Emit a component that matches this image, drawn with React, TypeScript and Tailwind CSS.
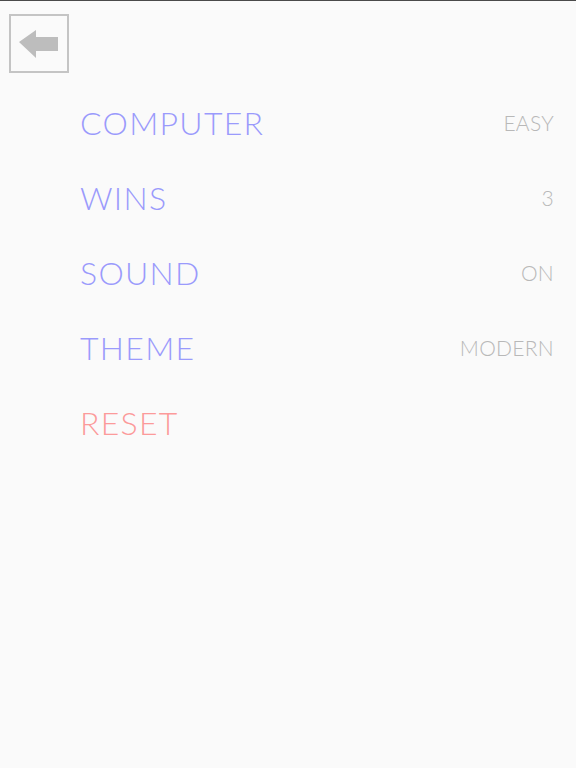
import React from "react";

const rows = [
  { label: "COMPUTER", value: "EASY" },
  { label: "WINS", value: "3" },
  { label: "SOUND", value: "ON" },
  { label: "THEME", value: "MODERN" },
];

export default function App() {
  return (
    <div
      className="w-[576px] h-[768px] bg-[#fafafa] border-t border-[#4a4a4a] overflow-hidden"
      style={{ fontFamily: "Lato, 'Noto Sans', sans-serif" }}
    >
      <div className="pl-[9px] pt-[13px]">
        <button className="w-[60px] h-[59px] border-2 border-[#c4c4c4] flex items-center justify-center">
          <svg width="40" height="28" viewBox="0 0 40 28">
            <polygon points="0,12 17,0 17,7 39,7 39,21 17,21 17,28" fill="#bdbdbd" />
          </svg>
        </button>
      </div>
      <div className="pl-[80px] pr-[22px] pt-[12px] flex flex-col">
        {rows.map((r) => (
          <div key={r.label} className="h-[75px] flex items-center justify-between">
            <span className="text-[32px] font-light text-[#9a9afc] tracking-[1.3px]">{r.label}</span>
            <span className="text-[21px] font-light text-[#b8b8b8] tracking-[0.3px]">{r.value}</span>
          </div>
        ))}
        <div className="h-[75px] flex items-center">
          <span className="text-[32px] font-light text-[#fc9a9a] tracking-[1.3px]">RESET</span>
        </div>
      </div>
    </div>
  );
}
